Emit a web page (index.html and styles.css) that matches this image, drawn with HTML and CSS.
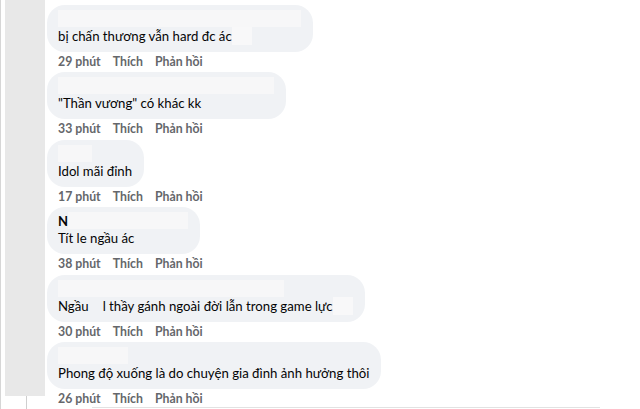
FILE: index.html
```html
<!DOCTYPE html>
<html lang="vi">
<head>
    <meta charset="UTF-8">
    <meta name="viewport" content="width=device-width, initial-scale=1.0">
    <title>Bình luận</title>
    <link rel="stylesheet" href="styles.css">
</head>
<body>
    <div class="page">
        <div class="rail">
            <div class="rail-block"></div>
            <div class="rail-tail"></div>
        </div>

        <div class="comments">
            <div class="comment">
                <div class="bubble">
                    <div class="name"><span class="blur w243"></span></div>
                    <div class="text">bị chấn thương vẫn hard đc ác<span class="patch"></span></div>
                </div>
                <div class="actions"><span>29 phút</span><span>Thích</span><span>Phản hồi</span></div>
            </div>

            <div class="comment">
                <div class="bubble">
                    <div class="name"><span class="blur w216"></span></div>
                    <div class="text">"Thần vương" có khác kk</div>
                </div>
                <div class="actions"><span>33 phút</span><span>Thích</span><span>Phản hồi</span></div>
            </div>

            <div class="comment">
                <div class="bubble">
                    <div class="name"><span class="blur w34"></span></div>
                    <div class="text">Idol mãi đỉnh</div>
                </div>
                <div class="actions"><span>17 phút</span><span>Thích</span><span>Phản hồi</span></div>
            </div>

            <div class="comment">
                <div class="bubble">
                    <div class="name">N<span class="blur w120"></span></div>
                    <div class="text">Tít le ngầu ác</div>
                </div>
                <div class="actions"><span>38 phút</span><span>Thích</span><span>Phản hồi</span></div>
            </div>

            <div class="comment">
                <div class="bubble">
                    <div class="name"><span class="blur w226"></span></div>
                    <div class="text">Ngầu<span class="gap"></span>l thầy gánh ngoài đời lẫn trong game lực<span class="patch"></span></div>
                </div>
                <div class="actions"><span>30 phút</span><span>Thích</span><span>Phản hồi</span></div>
            </div>

            <div class="comment">
                <div class="bubble">
                    <div class="name"><span class="blur w70"></span></div>
                    <div class="text">Phong độ xuống là do chuyện gia đình ảnh hưởng thôi</div>
                </div>
                <div class="actions"><span>26 phút</span><span>Thích</span><span>Phản hồi</span></div>
            </div>

            <div class="divider"></div>
        </div>
    </div>
</body>
</html>
```

FILE: styles.css
```css
body {
    margin: 0;
    background-color: #fff;
    font-family: Lato, "Noto Sans", sans-serif;
    color: #050505;
}

.page {
    display: flex;
    height: 409px;
    overflow: hidden;
}

.rail {
    width: 46px;
    flex-shrink: 0;
    border-left: 1px solid #d6d6d6;
    box-sizing: border-box;
    padding-left: 4px;
    display: flex;
    flex-direction: column;
}

.rail-block {
    width: 40px;
    height: 396px;
    flex-shrink: 0;
    background-color: #e8e8e8;
}

.rail-tail {
    width: 1px;
    flex: 1;
    margin-left: 21px;
    background-color: #cfcfcf;
}

.comments {
    flex: 1;
    padding-left: 1px;
    padding-top: 5px;
    display: flex;
    flex-direction: column;
    align-items: flex-start;
}

.comment {
    display: flex;
    flex-direction: column;
    align-items: flex-start;
    flex-shrink: 0;
}

.bubble {
    background-color: #f0f2f5;
    border-radius: 18px;
    padding: 5px 12px 7px 11px;
}

.name {
    height: 17px;
    display: flex;
    align-items: center;
    font-size: 13px;
    font-weight: 700;
}

.blur {
    display: inline-block;
    height: 17px;
    background-color: #f7f7f8;
}

.w243 { width: 243px; }
.w216 { width: 216px; }
.w34 { width: 34px; }
.w120 { width: 120px; }
.w226 { width: 226px; }
.w70 { width: 70px; }

.text {
    font-size: 13.2px;
    line-height: 18px;
    white-space: nowrap;
}

.patch {
    display: inline-block;
    width: 20px;
    height: 18px;
    vertical-align: top;
    background-color: #f8f8f9;
}

.gap {
    display: inline-block;
    width: 14px;
}

.actions {
    display: flex;
    gap: 12px;
    padding: 3px 0 3.4px 11px;
    font-size: 12.3px;
    font-weight: 700;
    line-height: 14px;
    color: #65676b;
}

.divider {
    flex-shrink: 0;
    margin-top: -2px;
    margin-left: 45px;
    width: 508px;
    height: 1px;
    background-color: #e2e2e2;
}
```
